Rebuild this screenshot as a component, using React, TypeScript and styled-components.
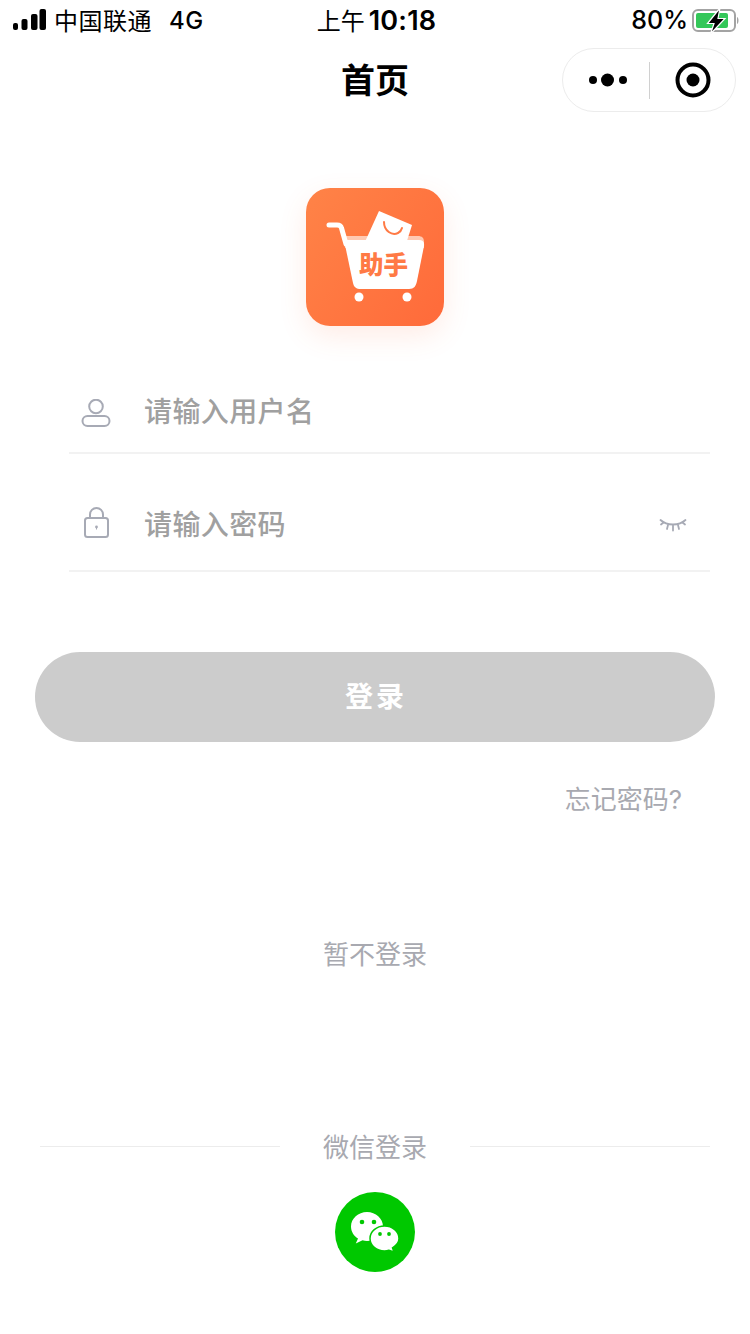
import React from "react";
import styled, { createGlobalStyle } from "styled-components";

const Global = createGlobalStyle`
  html, body { margin: 0; padding: 0; background: #fff; }
  body { font-family: Inter, "Noto Sans CJK SC", sans-serif; }
  * { box-sizing: border-box; }
`;

const Page = styled.div`
  width: 750px;
  height: 1334px;
  overflow: hidden;
  background: #fff;
  display: flex;
  flex-direction: column;
`;

const StatusBar = styled.div`
  height: 40px;
  display: grid;
  grid-template-columns: 1fr auto 1fr;
  align-items: center;
  padding: 0 10px 2px 13px;
  color: #000;
  font-size: 24px;
  line-height: 38px;
`;
const StatusLeft = styled.div`
  display: flex;
  align-items: center;
`;
const Carrier = styled.span`
  margin-left: 8px;
  font-family: "Noto Sans CJK SC", sans-serif;
  font-size: 24px;
  letter-spacing: 0.5px;
`;
const Network = styled.span`
  margin-left: 17px;
  padding-top: 2px;
  font-family: Inter, sans-serif;
  font-weight: 500;
  font-size: 24px;
  letter-spacing: 0.5px;
`;
const Clock = styled.div`
  font-family: "Noto Sans CJK SC", sans-serif;
  font-size: 24px;
  white-space: nowrap;
`;
const ClockTime = styled.span`
  font-family: Inter, sans-serif;
  font-weight: 600;
  font-size: 27px;
  letter-spacing: 0.2px;
  margin-left: 4px;
`;
const StatusRight = styled.div`
  display: flex;
  align-items: center;
  justify-content: flex-end;
  gap: 4px;
  font-family: Inter, sans-serif;
  font-size: 25px;
  font-weight: 500;
`;

const NavBar = styled.div`
  height: 80px;
  display: flex;
  align-items: center;
  justify-content: center;
  position: relative;
`;
const Title = styled.h1`
  margin: 0;
  padding-bottom: 4px;
  font-family: "Noto Sans CJK SC", sans-serif;
  font-size: 34px;
  font-weight: 700;
  color: #000;
`;
const Capsule = styled.div`
  position: absolute;
  right: 14px;
  top: 8px;
  width: 174px;
  height: 64px;
  border: 1px solid #ececec;
  border-radius: 32px;
  background: #fff;
  display: flex;
  align-items: center;
`;
const CapsuleSide = styled.div<{ $width: number; $shift: number }>`
  width: ${(p) => p.$width}px;
  flex: none;
  display: flex;
  align-items: center;
  justify-content: center;
  padding-left: ${(p) => p.$shift}px;
`;
const CapsuleDivider = styled.div`
  width: 1px;
  height: 37px;
  background: #d0d0d0;
`;

const LogoWrap = styled.div`
  margin: 68px auto 0;
  width: 138px;
  height: 138px;
  border-radius: 24px;
  background: linear-gradient(125deg, #ff8347 0%, #ff6a3a 100%);
  box-shadow: 0 10px 28px rgba(255, 112, 60, 0.13);
  flex: none;
`;

const Form = styled.div`
  margin: 0 40px 0 69px;
  display: flex;
  flex-direction: column;
`;
const Field = styled.div<{ $height: number; $top: number }>`
  height: ${(p) => p.$height}px;
  padding-top: ${(p) => p.$top}px;
  padding-right: 23px;
  display: flex;
  align-items: center;
  border-bottom: 2px solid #f2f2f2;
`;
const FieldIcon = styled.div<{ $top: number }>`
  width: 54px;
  padding: ${(p) => p.$top}px 0 0 12px;
  display: flex;
  flex: none;
`;
const Placeholder = styled.div`
  flex: 1;
  margin-left: 21px;
  font-family: "Noto Sans CJK SC", sans-serif;
  font-size: 28px;
  font-weight: 500;
  letter-spacing: 0.4px;
  color: #a0a0a0;
`;
const EyeToggle = styled.div`
  display: flex;
  padding-top: 4px;
`;

const LoginButton = styled.button`
  margin: 80px 35px 0;
  height: 90px;
  padding: 0 0 4px 2px;
  border: none;
  border-radius: 45px;
  background: #cccccc;
  color: #fff;
  font-family: "Noto Sans CJK SC", sans-serif;
  font-size: 28px;
  font-weight: 700;
  letter-spacing: 3px;
`;

const Forgot = styled.div`
  margin: 39px 68px 0 0;
  text-align: right;
  font-family: Inter, "Noto Sans CJK SC", sans-serif;
  font-size: 26px;
  line-height: 38px;
  color: #a8a9b0;
`;
const Skip = styled.div`
  margin-top: 115px;
  text-align: center;
  font-family: "Noto Sans CJK SC", sans-serif;
  font-size: 26px;
  line-height: 38px;
  color: #a8a9b0;
`;

const DividerRow = styled.div`
  margin: 155px 40px 0;
  height: 38px;
  display: flex;
  align-items: center;
`;
const DividerLine = styled.div`
  flex: 1;
  height: 1px;
  background: #ececec;
`;
const DividerText = styled.div`
  width: 190px;
  padding-bottom: 2px;
  text-align: center;
  font-family: "Noto Sans CJK SC", sans-serif;
  font-size: 26px;
  color: #a8a9b0;
`;
const WechatBtn = styled.div`
  margin: 27px auto 0;
  width: 80px;
  height: 80px;
  border-radius: 50%;
  background: #00c800;
  display: flex;
  align-items: center;
  justify-content: center;
  flex: none;
`;

const Signal = () => (
  <svg width="33" height="22" viewBox="0 0 33 22" fill="#000">
    <rect x="0" y="14" width="5" height="7" rx="2" />
    <rect x="8.500" y="10" width="6" height="11" rx="2" />
    <rect x="18" y="5" width="6.500" height="16" rx="2" />
    <rect x="26.500" y="0" width="6.500" height="21" rx="2" />
  </svg>
);

const Battery = () => (
  <svg width="48" height="27" viewBox="0 0 48 27">
    <rect x="1" y="3" width="42" height="21" rx="5" fill="none" stroke="#a3a3a3" strokeWidth="2" />
    <rect x="4" y="6" width="32" height="15" rx="2" fill="#34c759" />
    <path d="M45 10c2 .6 2 6.400 0 7z" fill="#a3a3a3" />
    <path d="M28 1 L15.500 16.500 H22 L18.500 27 L33 11.500 H26 Z" fill="#000" stroke="#fff" strokeWidth="1.200" />
  </svg>
);

const Dots = () => (
  <svg width="38" height="14" viewBox="0 0 38 14" fill="#000">
    <circle cx="4" cy="7" r="4" />
    <circle cx="18.500" cy="7" r="6.500" />
    <circle cx="34" cy="7" r="4" />
  </svg>
);

const Target = () => (
  <svg width="36" height="36" viewBox="0 0 36 36">
    <circle cx="18" cy="18" r="15.500" fill="none" stroke="#000" strokeWidth="4" />
    <circle cx="18" cy="18" r="6.500" fill="#000" />
  </svg>
);

const CartLogo = () => (
  <svg width="138" height="138" viewBox="0 0 138 138">
    <path d="M39 48 H112 C116 48 118 50 118 54 V60 H39 Z" fill="#ffc9b2" />
    <path d="M73 23 L106 37 L100 56 H58 Z" fill="#fff" />
    <path d="M78 34 C78 43 86 48 92 45 C94 44 95.500 42 96 40" fill="none" stroke="#ff7a45" strokeWidth="2" strokeLinecap="round" />
    <path d="M23 37 H31 C33.500 37 35 38 35.500 40 L40 56" fill="none" stroke="#fff" strokeWidth="5" strokeLinecap="round" />
    <path d="M38 52 H113 C117 52 118.500 54 118 58 L111 93 C110 98 108 101 103 101 H55 C50 101 48 99 47 95 Z" fill="#fff" />
    <circle cx="53" cy="109" r="4.500" fill="#fff" />
    <circle cx="101" cy="109" r="4.500" fill="#fff" />
    <text x="77.500" y="86" textAnchor="middle" fontFamily="'Noto Sans CJK SC', sans-serif" fontWeight="900" fontSize="24.500" fill="#ff7a45">助手</text>
  </svg>
);

const UserIcon = () => (
  <svg width="30" height="28" viewBox="0 0 30 28" fill="none" stroke="#a7aab5" strokeWidth="2">
    <circle cx="15" cy="7.500" r="6.800" />
    <rect x="1.500" y="17" width="27" height="10" rx="5" />
  </svg>
);
const LockIcon = () => (
  <svg width="30" height="32" viewBox="0 0 30 32" fill="none" stroke="#a7aab5" strokeWidth="2">
    <rect x="4" y="11" width="23" height="19" rx="2.500" />
    <path d="M9 11 V7.500 a6.500 6.500 0 0 1 13 0 V11" />
    <circle cx="15.500" cy="20" r="1.400" fill="#a7aab5" stroke="none" />
    <path d="M15.500 20 v2.500" strokeWidth="1" />
  </svg>
);
const EyeIcon = () => (
  <svg width="28" height="14" viewBox="0 0 28 14" fill="none" stroke="#a7aab5" strokeWidth="1.800" strokeLinecap="round">
    <path d="M1.500 2 C8 8 20 8 26.500 2" />
    <path d="M4.500 4.500 L2 6.500 M9 7 L8 11 M14 7.500 V12.500 M19 7 L20 11 M23.500 4.500 L26 6.500" />
  </svg>
);
const WechatIcon = () => (
  <svg width="48" height="40" viewBox="0 0 48 40">
    <path d="M16 0 C7.200 0 0 6.500 0 14.500 C0 19.500 2.800 24 7 26.500 L4.800 31.500 L11.500 28.300 C13 28.700 14.500 29 16 29 C24.800 29 32 22.500 32 14.500 C32 6.500 24.800 0 16 0 Z" fill="#fff" />
    <path d="M33.500 14 C25.500 14 19 19.600 19 26.500 C19 33.400 25.500 39 33.500 39 C35 39 36.500 38.800 38 38.300 L43 40 L41.500 35.800 C45.300 33.500 48 30.300 48 26.500 C48 19.600 41.500 14 33.500 14 Z" fill="#fff" stroke="#00c800" strokeWidth="1.500" />
    <circle cx="11" cy="10" r="2.300" fill="#00c800" />
    <circle cx="23" cy="10" r="2.300" fill="#00c800" />
    <circle cx="29" cy="22" r="1.900" fill="#00c800" />
    <circle cx="38" cy="22" r="1.900" fill="#00c800" />
  </svg>
);

export default function App() {
  return (
    <Page>
      <Global />
      <StatusBar>
        <StatusLeft>
          <Signal />
          <Carrier>中国联通</Carrier>
          <Network>4G</Network>
        </StatusLeft>
        <Clock>
          上午<ClockTime>10:18</ClockTime>
        </Clock>
        <StatusRight>
          80%
          <Battery />
        </StatusRight>
      </StatusBar>
      <NavBar>
        <Title>首页</Title>
        <Capsule>
          <CapsuleSide $width={86} $shift={3}>
            <Dots />
          </CapsuleSide>
          <CapsuleDivider />
          <CapsuleSide $width={85} $shift={0}>
            <Target />
          </CapsuleSide>
        </Capsule>
      </NavBar>
      <LogoWrap>
        <CartLogo />
      </LogoWrap>
      <Form>
        <Field $height={128} $top={42}>
          <FieldIcon $top={6}>
            <UserIcon />
          </FieldIcon>
          <Placeholder>请输入用户名</Placeholder>
        </Field>
        <Field $height={118} $top={22}>
          <FieldIcon $top={0}>
            <LockIcon />
          </FieldIcon>
          <Placeholder>请输入密码</Placeholder>
          <EyeToggle>
            <EyeIcon />
          </EyeToggle>
        </Field>
      </Form>
      <LoginButton>登录</LoginButton>
      <Forgot>忘记密码?</Forgot>
      <Skip>暂不登录</Skip>
      <DividerRow>
        <DividerLine />
        <DividerText>微信登录</DividerText>
        <DividerLine />
      </DividerRow>
      <WechatBtn>
        <WechatIcon />
      </WechatBtn>
    </Page>
  );
}
